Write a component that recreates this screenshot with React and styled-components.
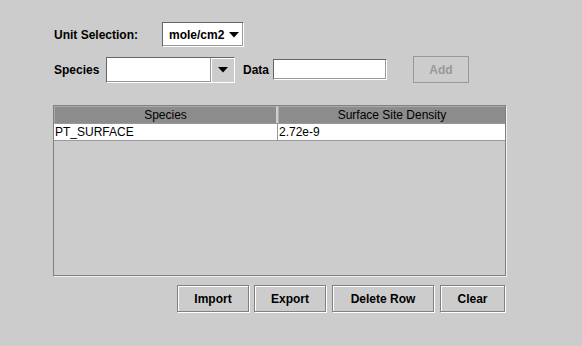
import React from 'react';
import styled, { createGlobalStyle } from 'styled-components';

const Global = createGlobalStyle`
    html, body {
        margin: 0;
        padding: 0;
        background: #cccccc;
    }
    body {
        font-family: "Liberation Sans", Arial, sans-serif;
    }
`;

const Panel = styled.div`
    width: 582px;
    height: 346px;
    background: #cccccc;
    box-sizing: border-box;
    padding: 22px 0 0 53px;
    display: flex;
    flex-direction: column;
`;

const Row = styled.div`
    display: flex;
    align-items: center;
    height: ${p => p.h}px;
    margin-top: ${p => p.mt || 0}px;
`;

const Label = styled.span`
    font-size: 12px;
    font-weight: bold;
    color: #000;
    width: ${p => (p.w ? `${p.w}px` : 'auto')};
    margin-left: ${p => p.ml || 0}px;
    padding-left: 1px;
`;

const Combo = styled.div`
    display: flex;
    align-items: center;
    justify-content: space-between;
    box-sizing: border-box;
    width: ${p => p.w}px;
    height: ${p => p.h}px;
    background: #fff;
    border: 1px solid #666;
    border-right-color: #fff;
    border-bottom-color: #fff;
    box-shadow: inset -1px -1px 0 #999;
    margin-left: ${p => p.ml || 0}px;
    font-size: 12px;
    font-weight: bold;
    padding-left: ${p => p.pl || 0}px;
`;

const ArrowBox = styled.div`
    display: flex;
    align-items: center;
    justify-content: center;
    box-sizing: border-box;
    width: ${p => p.w}px;
    height: 100%;
    background: ${p => (p.plain ? 'transparent' : '#cccccc')};
    border-left: ${p => (p.plain ? 'none' : '1px solid #999')};
    box-shadow: ${p => (p.plain ? 'none' : 'inset 1px 1px 0 #fff')};
`;

const Field = styled.div`
    box-sizing: border-box;
    width: ${p => p.w}px;
    height: ${p => p.h}px;
    background: #fff;
    border: 1px solid #666;
    border-right-color: #fff;
    border-bottom-color: #fff;
    box-shadow: inset -1px -1px 0 #999;
    margin-left: ${p => p.ml || 0}px;
`;

const Button = styled.div`
    display: flex;
    align-items: center;
    justify-content: center;
    box-sizing: border-box;
    width: ${p => p.w}px;
    height: 27px;
    margin-left: ${p => p.ml || 0}px;
    border: 1px solid ${p => (p.disabled ? '#999' : '#808080')};
    box-shadow: ${p => (p.disabled ? 'none' : 'inset 1px 1px 0 #fff, 1px 1px 0 #fff')};
    font-size: 12px;
    font-weight: bold;
    color: ${p => (p.disabled ? '#999' : '#000')};
    background: #cccccc;
`;

const Table = styled.div`
    box-sizing: border-box;
    width: 453px;
    height: 171px;
    margin-top: 22px;
    border: 1px solid #808080;
    box-shadow: 1px 1px 0 #eee;
    display: flex;
    flex-direction: column;
`;

const TRow = styled.div`
    display: grid;
    box-sizing: border-box;
    grid-template-columns: 224px 1fr;
    height: ${p => p.h}px;
    background: ${p => p.bg};
    border-bottom: 1px solid #999;
`;

const HeadCell = styled.div`
    display: flex;
    align-items: center;
    justify-content: center;
    font-size: 12px;
    color: #000;
    border-top: 1px solid #aaa;
    border-left: 1px solid #aaa;
    border-right: ${p => (p.last ? 'none' : '2px solid #cfcfcf')};
    background: #8c8c8c;
`;

const Cell = styled.div`
    display: flex;
    align-items: center;
    font-size: 12px;
    color: #000;
    padding-left: 1px;
    border-right: ${p => (p.last ? 'none' : '1px solid #999')};
`;

const ButtonBar = styled.div`
    display: flex;
    justify-content: flex-end;
    width: 452px;
    margin-top: 9px;
`;

const Tri = () => (
    <svg width="10" height="6" viewBox="0 0 10 6">
        <path d="M0 0 L10 0 L5 5.5 Z" fill="#000" />
    </svg>
);

export default function App() {
    return (
        <>
            <Global />
            <Panel>
                <Row h={25}>
                    <Label w={108}>Unit Selection:</Label>
                    <Combo w={82} h={25} pl={6}>
                        <span>mole/cm2</span>
                        <ArrowBox w={18} plain>
                            <Tri />
                        </ArrowBox>
                    </Combo>
                </Row>
                <Row h={27} mt={9}>
                    <Label w={52}>Species</Label>
                    <Combo w={129} h={26}>
                        <span />
                        <ArrowBox w={24}>
                            <Tri />
                        </ArrowBox>
                    </Combo>
                    <Label ml={7}>Data</Label>
                    <Field w={114} h={21} ml={4} />
                    <Button w={56} ml={26} disabled>
                        Add
                    </Button>
                </Row>
                <Table>
                    <TRow h={18} bg="#8c8c8c">
                        <HeadCell>Species</HeadCell>
                        <HeadCell last>Surface Site Density</HeadCell>
                    </TRow>
                    <TRow h={17} bg="#fff">
                        <Cell>PT_SURFACE</Cell>
                        <Cell last>2.72e-9</Cell>
                    </TRow>
                </Table>
                <ButtonBar>
                    <Button w={72}>Import</Button>
                    <Button w={72} ml={5}>Export</Button>
                    <Button w={102} ml={6}>Delete Row</Button>
                    <Button w={65} ml={6}>Clear</Button>
                </ButtonBar>
            </Panel>
        </>
    );
}
